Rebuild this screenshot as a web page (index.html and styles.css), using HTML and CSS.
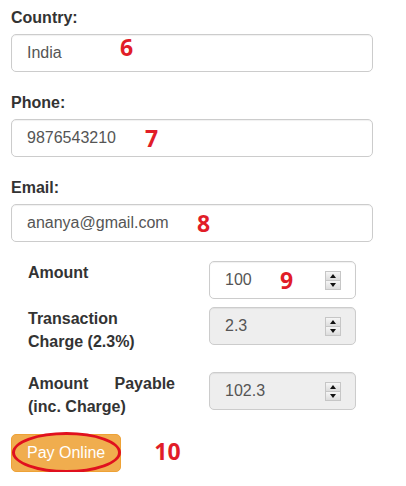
FILE: index.html
```html
<!DOCTYPE html>
<html lang="en">
<head>
    <meta charset="UTF-8">
    <meta name="viewport" content="width=device-width, initial-scale=1.0">
    <title>Payment details</title>
    <link rel="stylesheet" href="styles.css">
</head>
<body>
    <form class="pay-form">
        <div class="form-group">
            <label class="control-label">Country:</label>
            <div class="field">
                <input class="form-control" type="text" value="India">
                <span class="mark mark-6">6</span>
            </div>
        </div>

        <div class="form-group">
            <label class="control-label">Phone:</label>
            <div class="field">
                <input class="form-control" type="text" value="9876543210">
                <span class="mark mark-7">7</span>
            </div>
        </div>

        <div class="form-group">
            <label class="control-label">Email:</label>
            <div class="field">
                <input class="form-control" type="text" value="ananya@gmail.com">
                <span class="mark mark-8">8</span>
            </div>
        </div>

        <!-- Сумма и комиссия -->
        <div class="row row-amount">
            <div class="col-label"><label>Amount</label></div>
            <div class="col-input">
                <div class="num-box">
                    <input type="text" value="100">
                    <span class="spin"><i class="up"></i><i class="down"></i></span>
                    <span class="mark mark-9">9</span>
                </div>
            </div>
        </div>

        <div class="row row-charge">
            <div class="col-label"><label>Transaction Charge (2.3%)</label></div>
            <div class="col-input">
                <div class="num-box disabled">
                    <input type="text" value="2.3" disabled>
                    <span class="spin"><i class="up"></i><i class="down"></i></span>
                </div>
            </div>
        </div>

        <div class="row row-total">
            <div class="col-label"><label>Amount Payable (inc. Charge)</label></div>
            <div class="col-input">
                <div class="num-box disabled">
                    <input type="text" value="102.3" disabled>
                    <span class="spin"><i class="up"></i><i class="down"></i></span>
                </div>
            </div>
        </div>

        <div class="actions">
            <div class="btn-wrap">
                <button type="button" class="btn btn-warning">Pay Online</button>
                <span class="circle"></span>
            </div>
            <span class="mark-10">10</span>
        </div>
    </form>
</body>
</html>
```

FILE: styles.css
```css
* {
    margin: 0;
    padding: 0;
    box-sizing: border-box;
}

body {
    font-family: "Liberation Sans", Arial, sans-serif;
    font-size: 16px;
    color: #333;
    background: #fff;
}

.pay-form {
    width: 362px;
    margin-left: 11px;
    padding-top: 6px;
}

.form-group {
    margin-bottom: 19px;
}

.control-label,
.col-label label {
    display: block;
    font-weight: bold;
    line-height: 23px;
    color: #333;
}

.control-label {
    margin-bottom: 5px;
}

.field {
    position: relative;
}

.form-control {
    display: block;
    width: 100%;
    height: 38px;
    padding: 0 15px;
    font-family: inherit;
    font-size: 16px;
    color: #555;
    background: #fff;
    border: 1px solid #ccc;
    border-radius: 5px;
    box-shadow: inset 0 1px 1px rgba(0, 0, 0, 0.06);
    outline: none;
}

/* Строки с суммой */
.row {
    display: flex;
    align-items: flex-start;
}

.col-label,
.col-input {
    width: 181px;
    padding: 0 17px;
}

.col-label label {
    text-align: justify;
}

.row-amount {
    margin-top: 1px;
    margin-bottom: 8px;
}

.row-charge {
    margin-bottom: 19px;
}

.num-box {
    position: relative;
    display: flex;
    align-items: center;
    height: 38px;
    padding: 0 14px 0 15px;
    background: #fff;
    border: 1px solid #ccc;
    border-radius: 5px;
    box-shadow: inset 0 1px 1px rgba(0, 0, 0, 0.06);
}

.num-box.disabled {
    background: #eee;
}

.num-box input {
    flex: 1;
    min-width: 0;
    border: none;
    background: transparent;
    font-family: inherit;
    font-size: 16px;
    color: #555;
    outline: none;
}

.spin {
    display: flex;
    flex-direction: column;
    width: 16px;
    height: 19px;
    border: 1px solid #c6c6c6;
}

.spin i {
    flex: 1;
    display: flex;
    align-items: center;
    justify-content: center;
    background: linear-gradient(#f6f6f6, #dcdcdc);
}

.spin i + i {
    border-top: 1px solid #c6c6c6;
}

.spin .up::after,
.spin .down::after {
    content: "";
    border-left: 3px solid transparent;
    border-right: 3px solid transparent;
}

.spin .up::after {
    border-bottom: 4px solid #111;
}

.spin .down::after {
    border-top: 4px solid #111;
}

/* Кнопка оплаты */
.actions {
    display: flex;
    align-items: center;
    margin-top: 16px;
}

.btn-wrap {
    position: relative;
}

.btn {
    display: block;
    height: 38px;
    padding: 0 15px;
    font-family: inherit;
    font-size: 16px;
    border-radius: 5px;
    cursor: pointer;
}

.btn-warning {
    color: #fff;
    background: #f0ad4e;
    border: 1px solid #eea236;
}

/* Пометки красным */
.mark,
.mark-10 {
    font-family: "Open Sans", "DejaVu Sans", sans-serif;
    font-weight: bold;
    color: #e11d28;
    line-height: 1;
}

.mark {
    position: absolute;
    font-size: 23px;
}

.mark-6 { left: 109px; top: 2px; }
.mark-7 { left: 134px; top: 8px; }
.mark-8 { left: 186px; top: 8px; }
.mark-9 { left: 70px; top: 7px; }

.mark-10 {
    font-size: 23px;
    margin-left: 33px;
    margin-top: -3px;
}

.circle {
    position: absolute;
    left: 1px;
    top: -2px;
    width: 109px;
    height: 41px;
    border: 3px solid #e0101e;
    border-radius: 50%;
    pointer-events: none;
}
```
